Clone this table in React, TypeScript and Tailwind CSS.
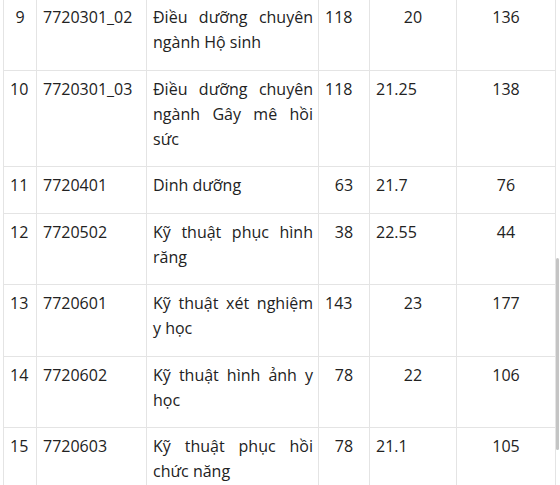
type Row = {
  n: string;
  code: string;
  name: string[];
  a: string;
  b: string;
  c: string;
};

const rows: Row[] = [
  { n: "9", code: "7720301_02", name: ["Điều dưỡng chuyên", "ngành Hộ sinh"], a: "118", b: "20", c: "136" },
  { n: "10", code: "7720301_03", name: ["Điều dưỡng chuyên", "ngành Gây mê hồi", "sức"], a: "118", b: "21.25", c: "138" },
  { n: "11", code: "7720401", name: ["Dinh dưỡng"], a: "63", b: "21.7", c: "76" },
  { n: "12", code: "7720502", name: ["Kỹ thuật phục hình", "răng"], a: "38", b: "22.55", c: "44" },
  { n: "13", code: "7720601", name: ["Kỹ thuật xét nghiệm", "y học"], a: "143", b: "23", c: "177" },
  { n: "14", code: "7720602", name: ["Kỹ thuật hình ảnh y", "học"], a: "78", b: "22", c: "106" },
  { n: "15", code: "7720603", name: ["Kỹ thuật phục hồi", "chức năng"], a: "78", b: "21.1", c: "105" },
];

const cell = "bg-white px-[6px] pt-[6px] pb-[14.5px]";

export default function App() {
  return (
    <div className="relative h-[485px] w-[560px] overflow-hidden bg-white font-['Open_Sans',sans-serif] text-[16px] leading-[25px] text-[#222]">
      <div className="-mt-[2px] ml-[3px] grid w-[553px] grid-cols-[32px_109px_171px_50px_86px_98px] gap-px border border-[#e4e4e4] bg-[#e4e4e4]">
        {rows.map((r) => (
          <div key={r.n} className="contents">
            <div className={`${cell} ${r.n === "9" ? "text-center" : "text-left"}`}>{r.n}</div>
            <div className={cell}>{r.code}</div>
            <div className={`${cell} pr-[5px]`}>
              {r.name.map((line, i) => (
                <div
                  key={i}
                  className={i < r.name.length - 1 ? "text-justify [text-align-last:justify]" : "text-left"}
                >
                  {line}
                </div>
              ))}
            </div>
            <div className={`${cell} ${r.a === "118" || r.a === "143" ? "text-left" : "text-center"}`}>{r.a}</div>
            <div className={`${cell} ${r.b.includes(".") ? "text-left" : "text-center"}`}>{r.b}</div>
            <div className={`${cell} text-center`}>{r.c}</div>
          </div>
        ))}
      </div>
      {/* scrollbar thumb */}
      <div className="absolute left-[556px] top-[258px] h-[192px] w-[3px] rounded-sm bg-[#c4c4c4]" />
    </div>
  );
}
